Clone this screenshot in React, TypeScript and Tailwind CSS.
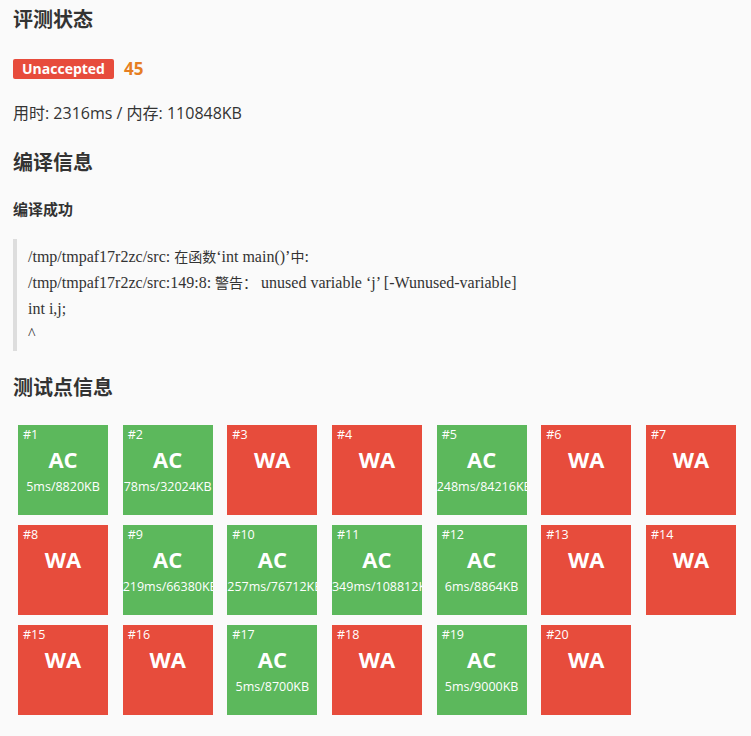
import React from "react";

type Point = { id: number; ok: boolean; info?: string };

const points: Point[] = [
  { id: 1, ok: true, info: "5ms/8820KB" },
  { id: 2, ok: true, info: "78ms/32024KB" },
  { id: 3, ok: false },
  { id: 4, ok: false },
  { id: 5, ok: true, info: "248ms/84216KB" },
  { id: 6, ok: false },
  { id: 7, ok: false },
  { id: 8, ok: false },
  { id: 9, ok: true, info: "219ms/66380KB" },
  { id: 10, ok: true, info: "257ms/76712KB" },
  { id: 11, ok: true, info: "349ms/108812KB" },
  { id: 12, ok: true, info: "6ms/8864KB" },
  { id: 13, ok: false },
  { id: 14, ok: false },
  { id: 15, ok: false },
  { id: 16, ok: false },
  { id: 17, ok: true, info: "5ms/8700KB" },
  { id: 18, ok: false },
  { id: 19, ok: true, info: "5ms/9000KB" },
  { id: 20, ok: false },
];

const sans = "font-['Segoe_UI','Open_Sans','Noto_Sans_CJK_SC',sans-serif]";

function Tile({ p }: { p: Point }) {
  return (
    <div
      className={`w-[90px] h-[90px] overflow-hidden text-white pt-[2px] ${
        p.ok ? "bg-[#5cb85c]" : "bg-[#e74c3c]"
      }`}
    >
      <div className="pl-[5px] text-[12.5px] leading-[16px]">#{p.id}</div>
      <div className="mt-[1px] text-center text-[22px] leading-[30px] font-bold">
        {p.ok ? "AC" : "WA"}
      </div>
      {p.info && (
        <div className="mt-[4px] text-center whitespace-nowrap text-[12.5px] leading-[18px]">
          {p.info}
        </div>
      )}
    </div>
  );
}

// 编译输出里的中文字形比西文小一点
function Zh({ children }: { children: React.ReactNode }) {
  return <span className="text-[14px]">{children}</span>;
}

export default function App() {
  return (
    <div className={`min-h-[736px] bg-[#fafafa] text-[#333] px-[13px] ${sans}`}>
      {/* 评测状态 */}
      <h2 className="pt-[6px] text-[20px] leading-[28px] font-bold">评测状态</h2>
      <div className="mt-[25px] flex items-center gap-[10px]">
        <span className="bg-[#e74c3c] text-white text-[14px] leading-[20px] font-bold px-[9px] rounded-[2px]">
          Unaccepted
        </span>
        <span className="text-[#e67e22] text-[17px] leading-[20px] font-bold">45</span>
      </div>
      <p className="mt-[23px] text-[16px] leading-[22px]">用时: 2316ms / 内存: 110848KB</p>

      {/* 编译信息 */}
      <h2 className="mt-[25px] text-[20px] leading-[28px] font-bold">编译信息</h2>
      <h3 className="mt-[20px] text-[15px] leading-[24px] font-bold">编译成功</h3>
      <blockquote className="mt-[18px] border-l-[4px] border-[#ddd] pl-[11px] py-[5px] font-['Liberation_Serif','Noto_Sans_CJK_SC',serif] text-[16px] leading-[25px]">
        <div>
          /tmp/tmpaf17r2zc/src: <Zh>在函数</Zh>‘int main()’<Zh>中</Zh>:
        </div>
        <div>
          /tmp/tmpaf17r2zc/src:149:8: <Zh>警告：</Zh> unused variable ‘j’ [-Wunused-variable]
        </div>
        <div>int i,j;</div>
        <div>^</div>
      </blockquote>

      {/* 测试点信息 */}
      <h2 className="mt-[23px] text-[20px] leading-[28px] font-bold">测试点信息</h2>
      <div className="mt-[23px] pl-[5px] grid grid-cols-[repeat(7,90px)] gap-x-[14.67px] gap-y-[10px]">
        {points.map((p) => (
          <Tile key={p.id} p={p} />
        ))}
      </div>
    </div>
  );
}
